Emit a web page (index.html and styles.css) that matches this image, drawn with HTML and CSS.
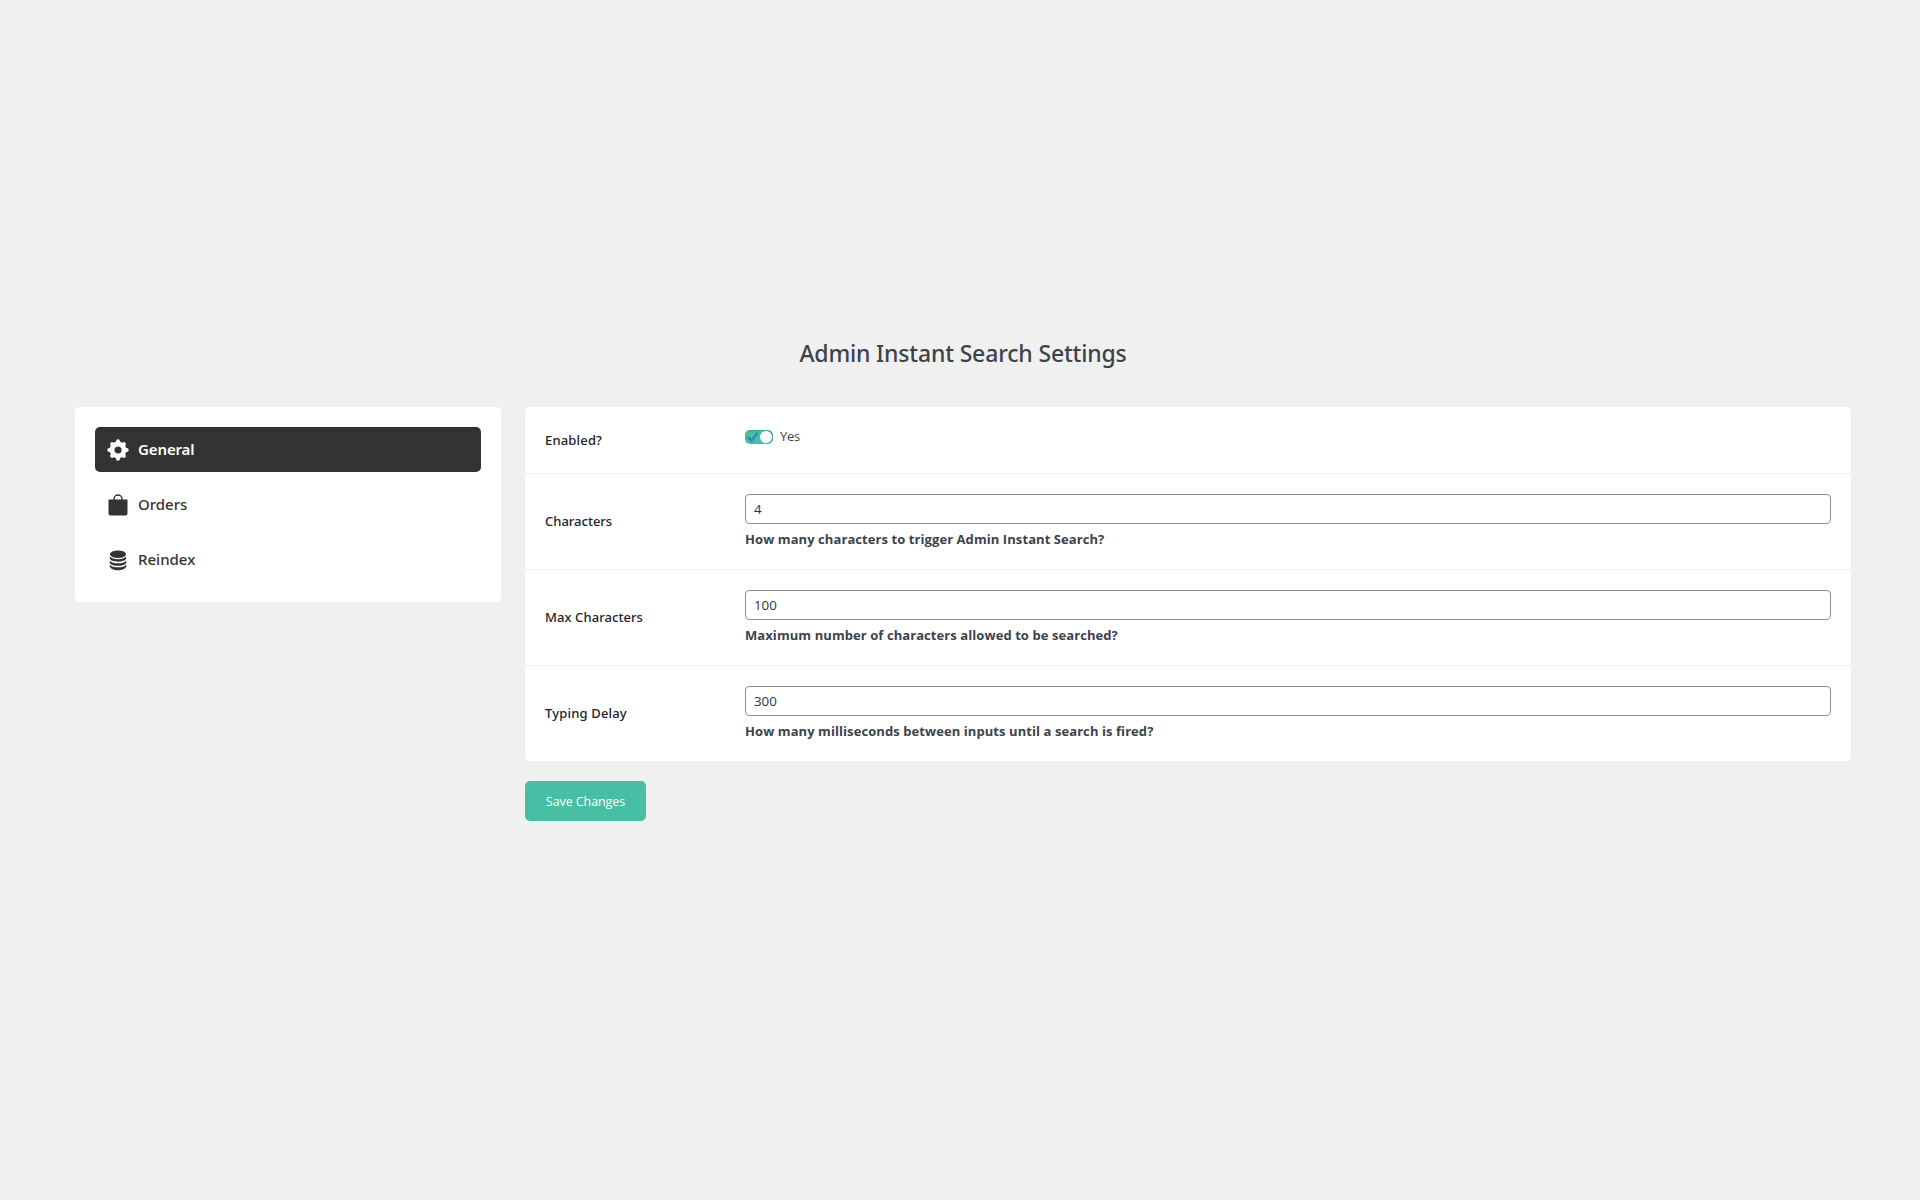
FILE: index.html
```html
<!DOCTYPE html>
<html lang="en">
<head>
<meta charset="utf-8">
<title>Admin Instant Search Settings</title>
<link rel="stylesheet" href="styles.css">
</head>
<body>
<main class="settings">
  <h1 class="title">Admin Instant Search Settings</h1>
  <div class="layout">
    <nav class="tabs">
      <a class="tab tab-active"><svg class="icon" viewBox="0 0 22 22"><g fill="none" stroke="currentColor"><circle cx="11" cy="11" r="6" stroke-width="4.800"/><path stroke-width="4" stroke-linecap="round" d="M11 3V2.300M11 19v.7M3 11H2.300M19 11h.7M5.600 5.600l-.5-.5M16.400 5.600l.5-.5M5.600 16.400l-.5.5M16.400 16.400l.5.5"/></g></svg><span class="tab-text">General</span></a>
      <a class="tab"><svg class="icon" viewBox="0 0 22 22"><path fill="currentColor" d="M1.500 5.500H20.500V19.500Q20.500 21.500 18.500 21.500H3.500Q1.500 21.500 1.500 19.500Z"/><path fill="none" stroke="currentColor" stroke-width="1.400" d="M7 6V5a4 4 0 0 1 8 0v1"/></svg><span class="tab-text">Orders</span></a>
      <a class="tab"><svg class="icon" viewBox="0 0 22 22"><g fill="currentColor"><ellipse cx="11" cy="5.300" rx="8" ry="3.800"/><path d="M2.800 7.600C5 11 17 11 19.200 7.600V9.600C17.500 13.800 4.500 13.800 2.800 9.600Z"/><path d="M2.800 11.700C5 15.100 17 15.100 19.200 11.700V13.700C17.500 17.900 4.500 17.900 2.800 13.700Z"/><path d="M2.800 15.800C5 19.200 17 19.200 19.200 15.800V17.800C17.500 22.400 4.500 22.400 2.800 17.800Z"/></g></svg><span class="tab-text">Reindex</span></a>
    </nav>
    <form class="form">
      <div class="panel">
        <div class="row row-toggle">
          <span class="label wide">Enabled?</span>
          <span class="switch-line"><span class="switch"><svg class="check" viewBox="0 0 12 12"><path d="M1.200 6.500L4.500 9.700L10.500 1.800" fill="none" stroke="#3582c4" stroke-width="2.500"/></svg><span class="knob"></span></span><span class="yes">Yes</span></span>
        </div>
        <div class="row">
          <label class="label snug" for="chars">Characters</label>
          <div class="field"><input class="input" id="chars" type="text" value="4"><p class="hint">How many characters to trigger Admin Instant Search?</p></div>
        </div>
        <div class="row">
          <label class="label" for="max">Max Characters</label>
          <div class="field"><input class="input" id="max" type="text" value="100"><p class="hint">Maximum number of characters allowed to be searched?</p></div>
        </div>
        <div class="row">
          <label class="label wide" for="delay">Typing Delay</label>
          <div class="field"><input class="input" id="delay" type="text" value="300"><p class="hint">How many milliseconds between inputs until a search is fired?</p></div>
        </div>
      </div>
      <button class="save" type="button">Save Changes</button>
    </form>
  </div>
</main>
</body>
</html>
```
FILE: styles.css
```css
* { box-sizing: border-box; }
body {
  margin: 0;
  min-height: 1200px;
  background: #f0f0f0;
  color: #3c434a;
  font: 13px/20px "Open Sans", "Noto Sans", sans-serif;
}
.settings { padding: 337px 69px 0 75px; }
.title, .tab, .label { font-family: "Noto Sans", "Open Sans", sans-serif; }
.title {
  margin: 0 0 38px;
  text-align: center;
  font-size: 23px;
  font-weight: 500;
  line-height: 32px;
  letter-spacing: -0.17px;
}
.layout {
  display: grid;
  grid-template-columns: 426px 1fr;
  gap: 24px;
  align-items: start;
}
.tabs {
  display: flex;
  flex-direction: column;
  gap: 10px;
  padding: 20px;
  background: #fff;
  border-radius: 5px;
}
.tab {
  display: flex;
  align-items: center;
  gap: 9.5px;
  height: 45px;
  padding: 0 11.5px;
  border-radius: 5px;
  color: #333;
  font-size: 15px;
  font-weight: 500;
}
.tab-active { background: #333; color: #fff; font-weight: 600; letter-spacing: -0.12px; }
.tab-text { padding-bottom: 2px; }
.icon { width: 22px; height: 22px; flex: none; }
.panel { background: #fff; border-radius: 5px; }
.row {
  display: grid;
  grid-template-columns: 200px 1fr;
  align-items: center;
  height: 96px;
  padding: 0 20px;
  border-bottom: 1px solid #efefef;
}
.row:last-child { border-bottom: 0; height: 95px; }
.row-toggle { height: 67px; }
.label { padding-bottom: 2px; color: #1d2327; font-weight: 500; letter-spacing: 0.07px; }
.row-toggle .label { padding-bottom: 0; }
.wide { letter-spacing: 0.17px; }
.snug { letter-spacing: 0; }
.field { align-self: start; padding-top: 20px; }
.input {
  display: block;
  width: 100%;
  height: 30px;
  padding: 0 8px;
  border: 1px solid #8c8f94;
  border-radius: 4px;
  background: #fff;
  color: #2c3338;
  font: 13.33px/28px "Open Sans", "Noto Sans", sans-serif;
}
.hint { margin: 5px 0 0; font-weight: 700; letter-spacing: 0.075px; }
.switch-line { display: flex; align-items: center; gap: 7px; margin-top: -7px; }
.switch {
  display: flex;
  align-items: center;
  justify-content: space-between;
  width: 28px;
  height: 14px;
  padding: 0 1px 0 2px;
  border-radius: 5px;
  background: #46bfa4;
  box-shadow: inset 0 1px 2px rgba(0, 0, 0, 0.1);
}
.check { width: 12px; height: 12px; }
.knob { width: 12px; height: 12px; border-radius: 50%; background: #fff; }
.yes { padding-bottom: 2px; letter-spacing: -0.3px; }
.save {
  display: block;
  width: 121px;
  height: 40px;
  margin-top: 20px;
  padding: 1px 0 0;
  border: 0;
  border-radius: 5px;
  background: #46bfa4;
  color: #fff;
  font: 12.5px/20px "Open Sans", "Noto Sans", sans-serif;
  letter-spacing: -0.08px;
}
```
